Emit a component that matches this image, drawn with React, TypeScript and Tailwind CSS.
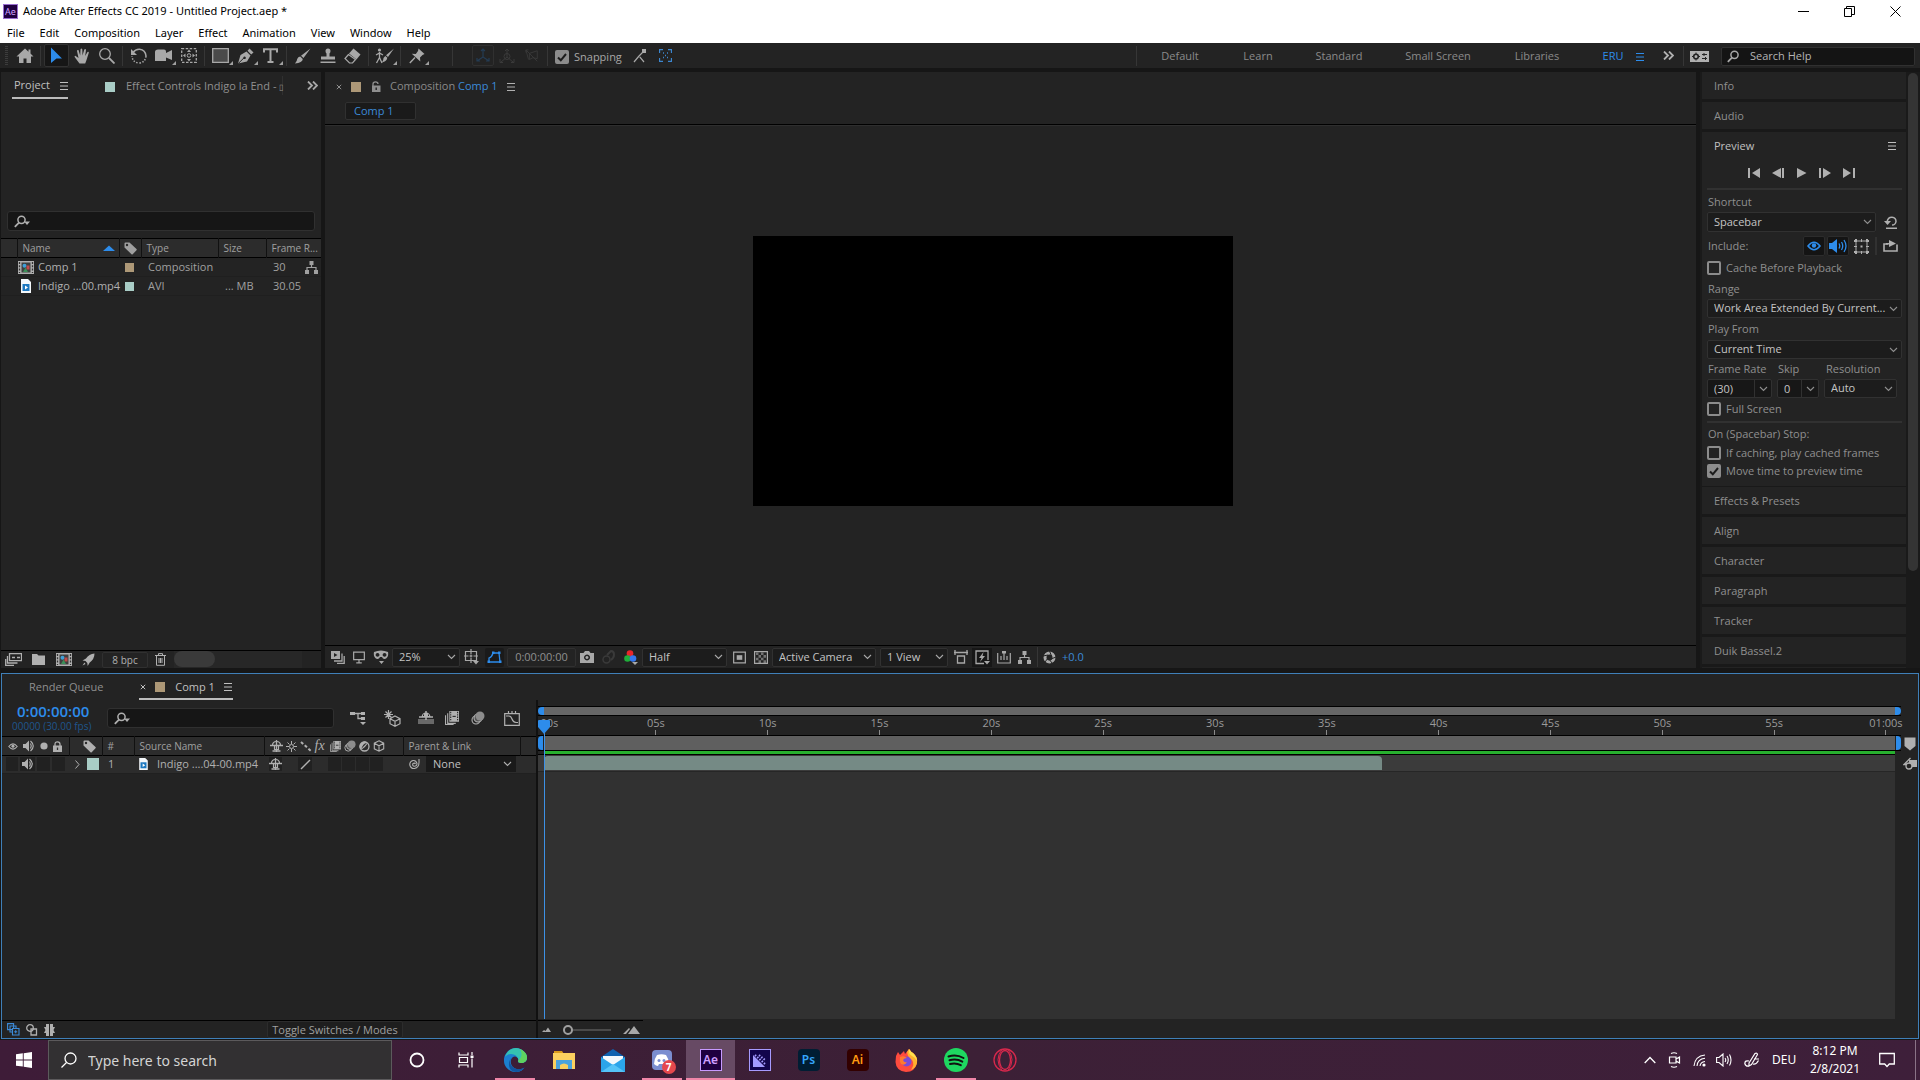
import React from "react";

type IcProps = { w?: number; h?: number; vb?: string; className?: string; children: React.ReactNode };

/* Icons share one stroke/fill convention: currentColor on a pixel grid. */
function Ic({ w = 16, h = 16, vb, className = "", children }: IcProps) {
  return (
    <svg
      width={w}
      height={h}
      viewBox={vb ?? `0 0 ${w} ${h}`}
      fill="none"
      stroke="currentColor"
      aria-hidden="true"
      className={"shrink-0 " + className}
    >
      {children}
    </svg>
  );
}
const F = { fill: "currentColor", stroke: "none" };

const Burger = () => (
  <Ic w={8} h={8}>
    <path d="M0 .5h8M0 4h8M0 7.5h8" />
  </Ic>
);
const DoubleChevron = () => (
  <Ic w={11} h={9}>
    <path d="M1 .5l4 4-4 4M6 .5l4 4-4 4" strokeWidth="1.8" />
  </Ic>
);
const Chevron = () => (
  <Ic w={9} h={6}>
    <path d="M1 1l3.5 3.5L8 1" strokeWidth="1.1" />
  </Ic>
);
const Lens = ({ caret = false }: { caret?: boolean }) => (
  <Ic w={17} h={13}>
    <circle cx="7.5" cy="4.8" r="3.6" strokeWidth="1.5" />
    <path d="M5 7.6L.8 11.8" strokeWidth="1.8" />
    {caret && <path {...F} d="M10 6.5h6l-3 3.5z" />}
  </Ic>
);
const CloseX = () => (
  <Ic w={6} h={6}>
    <path d="M.8.8l4.4 4.4M5.2.8L.8 5.2" />
  </Ic>
);
const Tag = () => (
  <Ic w={13} h={13}>
    <path {...F} fillRule="evenodd" d="M.5 1.5Q.5.5 1.5.5h4L12.5 7q.6.6 0 1.200L8.700 12.300q-.6.5-1.200 0L.5 5.500zM3 1.800a1.200 1.200 0 1 0 0 2.400 1.200 1.200 0 0 0 0-2.400z" />
  </Ic>
);
const Eye = ({ w = 10 }: { w?: number }) => (
  <Ic w={w} h={Math.round(w * 0.7)} vb="0 0 14 10">
    <path d="M1 5q6-7.500 12 0q-6 7.500-12 0z" strokeWidth="1.600" />
    <circle {...F} cx="7" cy="4.500" r="2.200" />
  </Ic>
);
const Speaker = () => (
  <Ic w={12} h={12}>
    <path {...F} d="M0 4h2.500L6 .5v11L2.500 8H0z" />
    <path d="M7.500 3.500q1.500 2.500 0 5M7.500 1q5.500 5 0 10" strokeWidth="1.200" />
  </Ic>
);
const Hier = () => (
  <Ic w={13} h={13}>
    <path {...F} d="M4.500 0h4v4h-4zM0 9h4v4H0zM9 9h4v4H9z" />
    <path d="M6.500 4v2.500M2 9V6.500h9V9" strokeWidth="1.200" />
  </Ic>
);
const CompIcon = () => (
  <Ic w={16} h={13}>
    <path {...F} d="M0 0h16v13H0z" />
    <path d="M1.500 1v11M14.500 1v11" stroke="#333" strokeWidth="1.300" strokeDasharray="2 1.300" />
    <path d="M3.500 1.500h9v10h-9z" stroke="none" fill="#3f3f3f" />
    <circle cx="6.500" cy="4.800" r="2" stroke="none" fill="#3fa0d8" />
    <path d="M8.500 4.500h3v4h-3z" stroke="none" fill="#c24a4a" />
    <path d="M7.500 6.500l2.500 4.500H5z" stroke="none" fill="#3c8f58" />
  </Ic>
);
const FileIcon = ({ small = false }: { small?: boolean }) => (
  <Ic w={small ? 9 : 10} h={small ? 12 : 14} vb="0 0 10 14">
    <path d="M0 0h7l3 3v11H0z" stroke="none" fill="#f4f8fb" />
    <path d="M1.500 5h7v7h-7z" stroke="none" fill="#1c78c0" />
    <path d="M4 6.500l3 2-3 2z" stroke="none" fill="#fff" />
  </Ic>
);
const Film = ({ w = 13 }: { w?: number }) => (
  <Ic w={w} h={w} vb="0 0 13 13">
    <path {...F} d="M4 0h9v10H4z" />
    <path d="M5.300 .8v8.600M11.700 .8v8.600" stroke="#262626" strokeDasharray="1.200 1" />
    <path d="M7 5h3" stroke="#262626" />
    <path d="M2.500 2v9.500H10M.5 4v8.500H8" />
  </Ic>
);
const BlurBalls = ({ w = 14 }: { w?: number }) => (
  <Ic w={w} h={w} vb="0 0 14 14">
    <circle cx="5" cy="9" r="4" strokeWidth="1.100" />
    <circle cx="7" cy="7" r="4" strokeWidth="1.100" fill="#555" />
    <circle {...F} cx="9" cy="5" r="4.500" fill="#8d8d8d" />
  </Ic>
);
const Cube = () => (
  <Ic w={12} h={12}>
    <path d="M6 .8l4.700 2.400v5.600L6 11.200 1.300 8.800V3.200zM1.300 3.200L6 5.800l4.700-2.600M6 5.800v5.400" strokeWidth="1.100" />
  </Ic>
);
const Shy = () => (
  <Ic w={13} h={12}>
    <path d="M0 5.500h13M6.500 0v12M2.500 11h8" strokeWidth="1.300" />
    <path d="M2.500 5.500q0-4 4-4t4 4M4.500 5.500v4h4v-4" strokeWidth="1.200" />
  </Ic>
);

function TabSwatch({ color }: { color: string }) {
  return <span className={"size-2.5 shrink-0 " + color} />;
}

function Pick({ options, label, className = "" }: { options: string[]; label: string; className?: string }) {
  return (
    <div className={"relative flex shrink-0 items-center " + className}>
      <select
        aria-label={label}
        className="h-full w-full appearance-none truncate rounded-[2px] border border-[#313131] bg-[#1c1c1c] pr-3.5 pl-1.5 text-[#c4c4c4] outline-none"
      >
        {options.map((o) => (
          <option key={o}>{o}</option>
        ))}
      </select>
      <span className="pointer-events-none absolute right-1">
        <Chevron />
      </span>
    </div>
  );
}

function Check({ label, checked = false, className = "" }: { label: string; checked?: boolean; className?: string }) {
  return (
    <label className={"flex h-[14px] shrink-0 items-center gap-[5px] leading-[14px] whitespace-nowrap " + className}>
      <span className="relative flex size-[14px] shrink-0">
        <input
          type="checkbox"
          defaultChecked={checked}
          className="peer size-[14px] appearance-none rounded-[2px] border-2 border-[#8c8c8c] checked:bg-[#8c8c8c]"
        />
        <svg className="pointer-events-none absolute inset-0 hidden peer-checked:block" width="14" height="14" fill="none" stroke="#1c1c1c" strokeWidth="2">
          <path d="M3 7.500l2.800 2.800L11 4" />
        </svg>
      </span>
      {label}
    </label>
  );
}

function Tool({ label, children, active = false, corner = false }: { label: string; children: React.ReactNode; active?: boolean; corner?: boolean }) {
  return (
    <button
      aria-label={label}
      className={
        "relative flex h-[23px] w-[25px] shrink-0 items-center justify-center " +
        (active ? "rounded-[2px] border border-[#323232] bg-[#161616] text-[#2d8ceb]" : "")
      }
    >
      {children}
      {corner && (
        <svg className="absolute right-0 bottom-0.5" width="4" height="4" fill="#a0a0a0">
          <path d="M4 0v4H0z" />
        </svg>
      )}
    </button>
  );
}
const Sep = () => (
  <span className="flex w-[7px] shrink-0 justify-center">
    <span className="h-5 w-px bg-[#363636]" />
  </span>
);

function TitleBar() {
  const menus = ["File", "Edit", "Composition", "Layer", "Effect", "Animation", "View", "Window", "Help"];
  return (
    <header className="h-[43px] shrink-0 bg-white font-['Noto_Sans',sans-serif] text-[11px] text-black">
      <div className="flex h-[23px] items-center pl-[3px]">
        <span className="flex size-[15px] items-center justify-center border border-[#9a6fd0] bg-[#1f0040] text-[9px] leading-none text-[#cfa3ff]">Ae</span>
        <h1 className="ml-[5px]">Adobe After Effects CC 2019 - Untitled Project.aep *</h1>
        <div className="mr-[19px] ml-auto flex items-center gap-[35px]">
          <button aria-label="Minimize">
            <Ic w={11} h={11}>
              <path d="M0 5.500h11" />
            </Ic>
          </button>
          <button aria-label="Restore">
            <Ic w={11} h={11}>
              <path d="M.5 2.500h7v8h-7zM2.500 2.500v-2h8v8h-3" />
            </Ic>
          </button>
          <button aria-label="Close">
            <Ic w={11} h={11}>
              <path d="M.5.5l10 10M10.500.5l-10 10" />
            </Ic>
          </button>
        </div>
      </div>
      <nav className="flex h-5 items-center gap-[15px] pl-[7px]">
        {menus.map((m) => (
          <button key={m}>{m}</button>
        ))}
      </nav>
    </header>
  );
}

function Toolbar() {
  return (
    <div className="flex h-[25px] shrink-0 items-center bg-[#232323] text-[#a8a8a8]">
      <span className="mr-1 ml-[5px] h-[19px] w-[3px] shrink-0 bg-[repeating-linear-gradient(#3c3c3c_0_1px,transparent_1px_2px)]" />
      <Tool label="Home">
        <Ic w={18} h={16}>
          <path {...F} d="M9 .5L.5 8.500h2.500V15h4.500v-4.500h3V15H15V8.500h2.500L14.500 5.600V1.500h-2v2.200z" />
        </Ic>
      </Tool>
      <Sep />
      <Tool label="Selection Tool" active>
        <Ic w={13} h={17}>
          <path {...F} d="M1 .5l11 11H6.500L1 16z" />
        </Ic>
      </Tool>
      <Tool label="Hand Tool">
        <Ic>
          <path {...F} d="M5.500 15.500L1 9.500Q0 7.800 1.300 7.700L4.500 10 3 3q0-1.500 1.500-1L6.200 7.500 6.500 1.200q.8-1.500 1.800 0L8.500 7.500 10.300 1.500q1.200-1 1.700.3L11.200 8l2.300-4q1.500-.6 1.300.8L12.500 12l-1.300 3.500z" />
        </Ic>
      </Tool>
      <Tool label="Zoom Tool">
        <Ic>
          <circle cx="6" cy="6" r="5.300" strokeWidth="1.300" />
          <path d="M10 10l5.500 5.500" strokeWidth="1.800" />
        </Ic>
      </Tool>
      <Sep />
      <Tool label="Rotation Tool">
        <Ic>
          <path d="M2 4.500Q4.500 1 8.500 1.200q6 .6 6.500 6.800" strokeWidth="1.500" />
          <path d="M15 8q-.5 6.500-7 7Q1.500 14.500 1 8" strokeWidth="1.500" strokeDasharray="1.500 1.500" />
          <path {...F} d="M0 1v6h6z" />
        </Ic>
      </Tool>
      <Tool label="Camera Tool" corner>
        <Ic w={19} h={14}>
          <path {...F} d="M1 3Q1 .5 4 .5h6q2 0 2 2v1.500L18 1v10L12 8.500V12H1z" />
        </Ic>
      </Tool>
      <Tool label="Pan Behind Tool">
        <Ic w={16} h={15}>
          <path d="M.7.7h14.600v13.600H.7z" strokeWidth="1.300" strokeDasharray="2.500 1.500" />
          <circle cx="8" cy="7.500" r="1.800" />
          <path {...F} d="M8 1.500l2 2.500H6zM8 13.500l2-2.500H6zM2 7.500l2.500-2v4zM14 7.500l-2.500-2v4z" />
        </Ic>
      </Tool>
      <Sep />
      <Tool label="Rectangle Tool" corner>
        <Ic w={17} h={15}>
          <path d="M.7.7h15.600v13.600H.7z" strokeWidth="1.300" fill="#4a4a4a" />
        </Ic>
      </Tool>
      <Tool label="Pen Tool" corner>
        <Ic>
          <path {...F} fillRule="evenodd" d="M0 15.500L2.500 7 8.500 3.500l4 4L9 13.500zM9.500 2.800L11.500.5l4 4-2.300 2zM6.500 8.500a1.300 1.300 0 1 0 .1 0z" />
          <path d="M0 15.800l6-6" stroke="#232323" />
        </Ic>
      </Tool>
      <Tool label="Type Tool" corner>
        <Ic w={15} h={15}>
          <path d="M1 4.500V1.200h13v3.300M7.500 1v13M4.500 14h6" strokeWidth="2" />
        </Ic>
      </Tool>
      <Sep />
      <Tool label="Brush Tool">
        <Ic>
          <path {...F} d="M15.500.5L8.500 10 6 7.800zM5.200 8.500l2.600 2.400Q7.500 14.500 0 15.500 2 13.500 2.200 11 3 8.500 5.200 8.500z" />
        </Ic>
      </Tool>
      <Tool label="Clone Stamp Tool">
        <Ic>
          <path {...F} d="M5.500 3q0-2.500 2.500-2.500T10.500 3q0 1.500-1 2.500v3H15v3H1v-3h5.500v-3q-1-1-1-2.500zM.5 13.500h15V15H.5z" />
        </Ic>
      </Tool>
      <Tool label="Eraser Tool">
        <Ic w={17} h={16}>
          <path {...F} d="M9.500.5l7 6-4 5-7.500-6z" />
          <path d="M4.500 6.500L1 10.500l4.500 4.500h3l3-3.500z" strokeWidth="1.200" />
        </Ic>
      </Tool>
      <Sep />
      <Tool label="Roto Brush Tool" corner>
        <Ic w={19} h={16}>
          <circle {...F} cx="4.500" cy="2" r="1.600" />
          <path d="M4.500 4v6M1 7l3.500-2L8 7M4.500 9.500L1.500 15M4.500 9.500L7 15" strokeWidth="1.300" />
          <path {...F} d="M19 .5L13 9l-2-1.700zM10.300 8l2 1.800q-.5 3.700-5.300 4.500Q8.500 12.500 8.500 10z" />
        </Ic>
      </Tool>
      <Sep />
      <Tool label="Puppet Pin Tool" corner>
        <Ic>
          <path {...F} d="M9.500.5l6 5.500-2 1-2.500 2.500.3 4L2.800 5.800l4 .2L9 3z" />
          <path d="M6 9.500L.8 15" strokeWidth="1.400" />
        </Ic>
      </Tool>
      <span className="ml-5" />
      <Sep />
      <span className="ml-4" />
      <div className="flex items-center text-[#3a3a3a]">
        <button aria-label="Local Axis" className="flex h-[21px] w-[22px] items-center justify-center rounded-[2px] border border-[#303030] text-[#243c54]">
          <Ic>
            <path d="M8 1v8l6 4M8 9l-6 4M6 3l2-2 2 2M2 10v3h3M14 10v3h-3" strokeWidth="1.200" />
          </Ic>
        </button>
        <Tool label="World Axis">
          <Ic>
            <circle cx="8" cy="8.500" r="3" />
            <path d="M8 1v8l6 5M8 9l-6 5M6 3l2-2 2 2M1 11v3.500h3M15 11v3.500h-3" />
          </Ic>
        </Tool>
        <Tool label="View Axis">
          <Ic w={14} h={14} vb="0 0 16 16">
            <path d="M5 5l9-3v9l-5-1-4 2zM1 1l13 13M1 4V1h3M1 1l3 11" />
          </Ic>
        </Tool>
      </div>
      <Sep />
      <Check label="Snapping" checked className="mt-0.5 ml-1" />
      <button aria-label="Snap to edges" className="ml-[11px]">
        <Ic w={14} h={14}>
          <path d="M1 13l5-6 5 6M6 7l5-5" strokeDasharray="8 1" strokeWidth="1.200" />
          <path {...F} d="M9 0h4v4h-4z" />
        </Ic>
      </button>
      <button aria-label="Snap to features" className="ml-3 text-[#3c86cf]">
        <Ic w={13} h={13}>
          <path d="M.5 4V.5H4M9 .5h3.500V4M12.500 9v3.500H9M4 12.500H.5V9" strokeWidth="1.300" />
          <path d="M4 4h1M8 4h1M4 8.500h1M8 8.500h1M6 6.500h1" strokeWidth="1.500" />
        </Ic>
      </button>
      <nav className="ml-auto flex h-full items-center text-[#8a8a8a]">
        <Sep />
        <button className="w-[80px] pt-0.5">Default</button>
        <button className="w-[76px] pt-0.5">Learn</button>
        <button className="w-[86px] pt-0.5">Standard</button>
        <button className="w-[112px] pt-0.5">Small Screen</button>
        <button className="w-[86px] pt-0.5">Libraries</button>
        <button className="ml-[22px] w-[22px] pt-0.5 text-[#2d8ceb]">ERU</button>
        <button aria-label="Workspace menu" className="mt-0.5 ml-3 text-[#2d8ceb]">
          <Burger />
        </button>
        <button aria-label="More workspaces" className="mr-1.5 ml-[19px] text-[#b0b0b0]">
          <DoubleChevron />
        </button>
        <Sep />
        <button aria-label="Sync settings" className="mt-0.5 ml-[3px] text-[#b0b0b0]">
          <Ic w={19} h={11}>
            <path {...F} d="M0 0h19v11H0z" />
            <circle cx="6" cy="5.500" r="2.300" stroke="#232323" strokeWidth="1.600" />
            <path d="M6 1.500v8M2 5.500h8" stroke="#232323" strokeDasharray="1.500 5" />
            <path d="M12 3.500h5M12 7.500h5" stroke="#232323" />
            <path d="M14 2v3M15.500 6v3" stroke="#232323" />
          </Ic>
        </button>
      </nav>
      <label className="mt-0.5 mr-[5px] ml-3 flex h-[19px] w-[194px] items-center gap-1.5 rounded-[2px] border border-[#303030] bg-[#141414] pl-[5px]">
        <Lens />
        <input aria-label="Search Help" placeholder="Search Help" className="w-32 bg-transparent outline-none placeholder:text-[#b4b4b4]" />
      </label>
    </div>
  );
}

function ProjectPanel() {
  const th = "h-full border-l border-[#111] pl-[5px] text-left font-normal";
  return (
    <section className="flex w-80 shrink-0 flex-col overflow-hidden bg-[#232323]">
      <div className="flex h-[27px] items-center pl-[11px]">
        <button className="flex h-[27px] w-14 items-center justify-between border-b-2 border-[#bcbcbc] pt-0.5 pl-0.5 text-[#c0c0c0]">
          Project <Burger />
        </button>
        <button className="ml-[37px] flex w-[178px] items-center gap-[11px] border-r border-[#303030] pt-0.5 whitespace-nowrap">
          <TabSwatch color="bg-[#a9cdc6]" />
          <span>
            Effect Controls Indigo la End - <span className="text-[8px]">▯</span>
          </span>
        </button>
        <button aria-label="More tabs" className="mr-[3px] ml-auto text-[#a8a8a8]">
          <DoubleChevron />
        </button>
      </div>
      <label className="mx-1.5 mt-[112px] flex h-5 shrink-0 items-center rounded-[3px] border border-[#303030] bg-[#161616] pl-1.5 text-[#b0b0b0]">
        <Lens caret />
        <input aria-label="Search project" className="w-full bg-transparent outline-none" />
      </label>
      <table className="mt-[7px] w-full table-fixed border-collapse text-[11px]">
        <colgroup>
          <col className="w-4" />
          <col className="w-[102px]" />
          <col className="w-[22px]" />
          <col className="w-[77px]" />
          <col className="w-12" />
          <col className="w-[37px]" />
          <col />
        </colgroup>
        <thead>
          <tr className="h-[19px] border-y border-black bg-[#2c2c2c] text-[10px] text-[#a0a0a0]">
            <th />
            <th className={th}>
              <span className="flex items-center justify-between pr-1">
                Name
                <Ic w={12} h={6}>
                  <path d="M0 6l6-5.500L12 6z" fill="#2d8ceb" stroke="none" />
                </Ic>
              </span>
            </th>
            <th aria-label="Label" className="border-l border-[#111] pl-1">
              <Tag />
            </th>
            <th className={th}>Type</th>
            <th className={th}>Size</th>
            <th colSpan={2} className={th}>Frame R...</th>
          </tr>
        </thead>
        <tbody className="text-[#a0a0a0]">
          <tr className="h-[19px] border-b border-[#1f1f1f]">
            <td colSpan={2} className="pl-[17px]">
              <span className="flex items-center gap-1 text-[#b0b0b0]">
                <CompIcon /> Comp 1
              </span>
            </td>
            <td className="pl-1.5"><span className="block size-[9px] bg-[#ad9877]" /></td>
            <td className="pl-[7px]">Composition</td>
            <td />
            <td className="pl-[7px]">30</td>
            <td className="pl-0.5"><Hier /></td>
          </tr>
          <tr className="h-[19px] border-b border-[#1f1f1f]">
            <td colSpan={2} className="pl-5">
              <span className="flex items-center gap-[7px] whitespace-nowrap text-[#b0b0b0]">
                <FileIcon /> Indigo ...00.mp4
              </span>
            </td>
            <td className="pl-1.5"><span className="block size-[9px] bg-[#a9cdc6]" /></td>
            <td className="pl-[7px]">AVI</td>
            <td className="pl-[7px] whitespace-nowrap">... MB</td>
            <td className="pl-[7px]">30.05</td>
            <td />
          </tr>
        </tbody>
      </table>
      <div className="mt-auto flex h-[18px] items-center border-t border-black pl-1 text-[#b0b0b0]">
        <button aria-label="Interpret footage">
          <Ic w={17} h={13}>
            <path d="M4.500.7h12v7h-12zM7 4.500h3M12 4.500h3" strokeWidth="1.300" />
            <path d="M2.500 3v7h10M.7 6v6.300H9" strokeWidth="1.300" />
          </Ic>
        </button>
        <button aria-label="New folder" className="ml-2.5">
          <Ic w={13} h={11}>
            <path {...F} d="M0 0h5l1.500 1.500H13V11H0z" />
          </Ic>
        </button>
        <button aria-label="New composition" className="ml-[11px]">
          <CompIcon />
        </button>
        <button aria-label="Project settings" className="ml-2.5">
          <Ic w={13} h={13}>
            <path {...F} d="M12.500.5Q7 .8 4 5.500L.5 7.500l3 .5 1.800 2 .4 3 2-3.500Q12.500 6 12.500.5zM2.500 9.500L.5 12.500l3-1.500z" />
          </Ic>
        </button>
        <button className="ml-[7px] h-4 w-[46px] rounded-[2px] border border-[#303030] text-[10px] leading-[14px]">8 bpc</button>
        <button aria-label="Delete" className="ml-[7px]">
          <Ic w={11} h={13}>
            <path d="M0 2.500h11M3.500 2V.6h4V2M1.500 2.500v9.800h8V2.500M4 5v5M5.500 5v5M7 5v5" />
          </Ic>
        </button>
        <span className="ml-2 h-[17px] w-[128px] bg-[#272727]">
          <span className="block h-4 w-[41px] rounded-full bg-[#3a3a3a]" />
        </span>
      </div>
    </section>
  );
}

function CompPanel() {
  const box = "h-[19px]";
  return (
    <section className="flex min-w-0 flex-1 flex-col overflow-hidden bg-[#232323]">
      <div className="flex h-[27px] items-center pt-0.5 pl-[11px]">
        <button aria-label="Close tab">
          <CloseX />
        </button>
        <span className="ml-[9px]" />
        <TabSwatch color="bg-[#ad9877]" />
        <Ic w={9} h={11} className="ml-[11px]">
          <path d="M1 5V3Q1 .8 3.500.8T6 3" strokeWidth="1.300" />
          <path {...F} d="M0 4.500h8.500V11H0z" />
          <path d="M4.200 6.500v2.500" stroke="#232323" strokeWidth="1.400" />
        </Ic>
        <button className="ml-[9px] text-[#8a8a8a]">
          Composition <span className="text-[#3c8ad8]">Comp 1</span>
        </button>
        <button aria-label="Panel menu" className="ml-[9px] text-[#b0b0b0]">
          <Burger />
        </button>
      </div>
      <div className="flex h-[26px] items-start border-b border-black pt-[3px] pl-5">
        <button className="h-[18px] w-[71px] rounded-[2px] border border-[#303030] bg-[#1a1a1a] pl-2 text-left leading-[14px] text-[#3c8ad8]">Comp 1</button>
      </div>
      <div className="flex min-h-0 flex-1 items-center justify-center border-t border-[#2e2e2e] pr-9 pb-[30px]">
        <div className="h-[270px] w-[480px] bg-black" />
      </div>
      <div className="flex h-[23px] shrink-0 items-center border-t border-black pl-1.5 whitespace-nowrap text-[#a8a8a8]">
        <button aria-label="Always preview">
          <Ic w={14} h={13}>
            <path {...F} fillRule="evenodd" d="M0 0h9v8H0zM3 2v4l3.500-2z" />
            <path d="M11 2.500v7.500H3M13.200 5v7.300H6" strokeWidth="1.300" />
          </Ic>
        </button>
        <button aria-label="Primary viewer" className="ml-2">
          <Ic w={12} h={13} vb="0 0 13 13">
            <path d="M.7.7h11.600v8H.7zM3.500 12.300h6M6.500 9v3" strokeWidth="1.300" />
          </Ic>
        </button>
        <button aria-label="VR viewer" className="ml-2">
          <Ic w={16} h={15}>
            <path {...F} fillRule="evenodd" d="M1 2q7-3 14 0 1 5-3 7-2 .5-3-2H7Q6 9.500 4 9 0 7 1 2zM4.500 3a1.900 1.900 0 1 0 .1 0zM11.500 3a1.900 1.900 0 1 0 .1 0zM6 11h5l-2.500 3z" />
          </Ic>
        </button>
        <Pick label="Magnification" options={["25%"]} className={box + " ml-[3px] w-[68px]"} />
        <button aria-label="Grid and guides" className="ml-1">
          <Ic w={16} h={16}>
            <path d="M1.500 2.500h11v9h-11zM7 0v5M7 9v5M0 7h4.500M9.500 7H14M5.500 7h3M7 5.500v3" strokeWidth="1.200" />
            <path {...F} d="M9 12h6l-3 3.500z" />
          </Ic>
        </button>
        <button aria-label="Toggle mask visibility" className="ml-[5px] flex h-[19px] w-[19px] items-center justify-center rounded-[2px] bg-[#1a1a1a] text-[#2d8ceb]">
          <Ic w={15} h={13}>
            <path d="M2 11V7q3-1 4-5h6l1 9z" strokeWidth="1.300" />
            <path {...F} d="M.5 9.500H3V12H.5zM12 9.500h2.500V12H12zM11 .5h2.500V3H11zM5 .5h2.500V3H5z" />
          </Ic>
        </button>
        <button className="ml-[3px] h-[19px] w-[69px] rounded-[2px] border border-[#303030] text-[#8f8f8f]">0:00:00:00</button>
        <button aria-label="Take snapshot" className="ml-1">
          <Ic w={14} h={12}>
            <path {...F} fillRule="evenodd" d="M0 2h3.500L5 0h4l1.500 2H14v10H0zM7 3.500a3 3 0 1 0 .1 0zM7 5a1.500 1.500 0 1 1-.1 0z" />
          </Ic>
        </button>
        <button aria-label="Show snapshot" className="ml-2 text-[#3a3a3a]">
          <Ic w={14} h={14}>
            <circle cx="4.500" cy="9.500" r="3.500" strokeWidth="1.500" />
            <path d="M5 5l4-4q3 0 3 3.500T9 10" strokeWidth="2" />
          </Ic>
        </button>
        <button aria-label="Show channel" className="ml-2">
          <Ic w={15} h={15}>
            <circle cx="6" cy="3.500" r="3.300" stroke="none" fill="#e8262b" />
            <circle cx="3.500" cy="8.500" r="3.300" stroke="none" fill="#1fae3a" />
            <circle cx="9" cy="8.500" r="3.300" stroke="none" fill="#3478f0" />
            <path {...F} d="M8 12h6l-3 3z" />
          </Ic>
        </button>
        <Pick label="Resolution" options={["Half"]} className={box + " ml-[3px] w-[85px]"} />
        <button aria-label="Region of interest" className="ml-1.5">
          <Ic w={13} h={13} vb="0 0 14 13">
            <path d="M.7.7h12.600v11.600H.7z" strokeWidth="1.300" />
            <path {...F} d="M4 4h6v5H4z" />
          </Ic>
        </button>
        <button aria-label="Transparency grid" className="ml-2">
          <Ic w={14} h={13}>
            <path d="M.6.6h12.800v11.800H.6z" strokeWidth="1.200" />
            <path d="M2 2.800h10M2 8h10" strokeWidth="2.600" strokeDasharray="2.500 2.500" opacity=".6" />
            <path d="M4.500 5.400h9M4.500 10.600h9" strokeWidth="2.600" strokeDasharray="2.500 2.500" opacity=".6" />
          </Ic>
        </button>
        <Pick label="3D view" options={["Active Camera"]} className={box + " ml-1 w-[104px]"} />
        <Pick label="View layout" options={["1 View"]} className={box + " ml-1 w-[68px]"} />
        <button aria-label="Pixel aspect ratio" className="ml-1.5">
          <Ic w={14} h={14}>
            <path d="M0 2.500h14M1 0v5M13 0v5M3.500 6h7v7h-7z" strokeWidth="1.300" />
          </Ic>
        </button>
        <button aria-label="Fast previews" className="ml-1 flex h-[19px] w-5 items-center justify-center bg-[#171717]">
          <Ic w={15} h={15}>
            <path d="M9 13.500H1V1h12v9" strokeWidth="1.300" />
            <path {...F} d="M8.500 2L4 8h2.500L5 12l5-6H7.500zM9 11h6l-3 3.500z" />
          </Ic>
        </button>
        <button aria-label="Timeline" className="ml-[5px]">
          <Ic w={14} h={13}>
            <path d="M.7 2v10h12.600V2M4 5v4M7 2v7M10 5v4" strokeWidth="1.200" />
            <path {...F} d="M5 0h4v2.500H5z" />
          </Ic>
        </button>
        <button aria-label="Flowchart" className="mr-[3px] ml-[7px]">
          <Hier />
        </button>
        <Sep />
        <button aria-label="Reset exposure" className="ml-0.5">
          <Ic w={13} h={13}>
            <circle cx="6.500" cy="6.500" r="4.500" strokeWidth="3" />
            <path d="M6.500 0l2 5M13 6l-5 2M9 12L6 8M2 11l3-4M0 5l5-1" stroke="#232323" />
          </Ic>
        </button>
        <button className="ml-1.5 text-[#3c8ad8]">+0.0</button>
      </div>
    </section>
  );
}

function PanelTitle({ children }: { children: React.ReactNode }) {
  return <button className="flex h-[30px] w-full shrink-0 items-center border-b-3 border-[#191919] pt-0.5 pl-3">{children}</button>;
}

function NumPick({ label, value, w, split }: { label: string; value: string; w: string; split: string }) {
  return (
    <div className={"flex h-[19px] items-center rounded-[2px] border border-[#313131] bg-[#171717] " + w}>
      <input aria-label={label} defaultValue={value} className={"h-full border-r border-[#313131] bg-transparent pl-1.5 text-[#c4c4c4] outline-none " + split} />
      <button aria-label={label + " options"} className="flex flex-1 justify-center">
        <Chevron />
      </button>
    </div>
  );
}

function SidePanels() {
  const iconBtn = "flex h-5 w-[22px] items-center justify-center rounded-[2px] border border-[#2c2c2c] bg-[#141414] text-[#2d8ceb]";
  return (
    <aside className="flex w-[220px] shrink-0 overflow-hidden bg-[#1a1a1a]">
      <div className="ml-0.5 flex w-[204px] shrink-0 flex-col bg-[#232323]">
        <PanelTitle>Info</PanelTitle>
        <PanelTitle>Audio</PanelTitle>
        <div className="flex h-[355px] shrink-0 flex-col border-b border-[#191919] pr-1 pl-[5px]">
          <div className="flex h-7 shrink-0 items-center justify-between pr-1.5 pl-[7px] text-[#c0c0c0]">
            <h2>Preview</h2>
            <button aria-label="Preview menu">
              <Burger />
            </button>
          </div>
          <div className="mt-2 flex h-2.5 shrink-0 items-center justify-center gap-3 pr-1.5 text-[#b0b0b0]">
            <button aria-label="First frame">
              <Ic w={12} h={10}>
                <path {...F} d="M0 0h2v10H0zM12 0v10L4 5z" />
              </Ic>
            </button>
            <button aria-label="Previous frame">
              <Ic w={12} h={10}>
                <path {...F} d="M10 0h2v10h-2zM9 0v10L0 5z" />
              </Ic>
            </button>
            <button aria-label="Play">
              <Ic w={11} h={10}>
                <path {...F} d="M1 0v10l9.500-5z" />
              </Ic>
            </button>
            <button aria-label="Next frame">
              <Ic w={12} h={10}>
                <path {...F} d="M0 0h2v10H0zM4 0v10l8-5z" />
              </Ic>
            </button>
            <button aria-label="Last frame">
              <Ic w={12} h={10}>
                <path {...F} d="M10 0h2v10h-2zM0 0v10l8-5z" />
              </Ic>
            </button>
          </div>
          <hr className="mt-2.5 border-t-2 border-[#313131]" />
          <p className="mt-[3px] pl-px leading-[18px]">Shortcut</p>
          <div className="mt-px flex items-center justify-between pr-1">
            <Pick label="Shortcut" options={["Spacebar"]} className="h-5 w-[169px]" />
            <button aria-label="Reset" className="text-[#b0b0b0]">
              <Ic w={14} h={13}>
                <path d="M3 6Q4 1 8 1.200 12 1.500 12 5.500 11.500 9 8 9M2 12.300h11" strokeWidth="1.500" />
                <path {...F} d="M0 5h7L3.500 9z" />
              </Ic>
            </button>
          </div>
          <div className="mt-1 flex h-5 shrink-0 items-center pl-px">
            Include:
            <button aria-label="Include video" className={"ml-auto " + iconBtn}>
              <Eye w={14} />
            </button>
            <button aria-label="Include audio" className={"ml-0.5 " + iconBtn}>
              <Ic w={18} h={14}>
                <path {...F} d="M0 4h3l5-4v14l-5-4H0z" />
                <path d="M10 4.500q1.500 2.500 0 5M12.500 3q2.500 4 0 8M15 1q4 6 0 12" strokeWidth="1.300" />
              </Ic>
            </button>
            <button aria-label="Include overlays" className="ml-[5px] text-[#b0b0b0]">
              <Ic w={15} h={15}>
                <path d="M2 2h11v11H2z" />
                <path {...F} d="M0 1h3v2H0zM1 0h2v3H1zM12 1h3v2h-3zM12 0h2v3h-2zM0 12h3v2H0zM1 12h2v3H1zM12 12h3v2h-3zM12 12h2v3h-2zM6.500 6.500h2v2h-2zM7 0h1v3H7zM7 12h1v3H7zM0 7h3v1H0zM12 7h3v1h-3z" />
              </Ic>
            </button>
            <span className="mx-1.5 h-[18px] w-0.5 bg-[#313131]" />
            <button aria-label="Loop" className="mr-1 text-[#b0b0b0]">
              <Ic w={15} h={12}>
                <path d="M5 4H1v7h13V4.500" strokeWidth="1.600" />
                <path {...F} d="M6 0l7 3.500-7 3.500zM3 3h4v1.500H3z" />
              </Ic>
            </button>
          </div>
          <Check label="Cache Before Playback" className="mt-[5px]" />
          <p className="mt-[5px] pl-px leading-[18px]">Range</p>
          <Pick label="Range" options={["Work Area Extended By Current..."]} className="mt-px h-[19px] w-[195px]" />
          <p className="mt-0.5 pl-px leading-[18px]">Play From</p>
          <Pick label="Play From" options={["Current Time"]} className="mt-0.5 h-[19px] w-[195px]" />
          <div className="mt-px flex pl-px leading-[18px]">
            <span className="w-[70px]">Frame Rate</span>
            <span className="w-12">Skip</span>
            <span>Resolution</span>
          </div>
          <div className="mt-px flex shrink-0 gap-[5px]">
            <NumPick label="Frame Rate" value="(30)" w="w-[65px]" split="w-[47px]" />
            <NumPick label="Skip" value="0" w="w-[42px]" split="w-6" />
            <Pick label="Preview resolution" options={["Auto"]} className="h-[19px] w-[73px]" />
          </div>
          <Check label="Full Screen" className="mt-1" />
          <hr className="mt-[5px] border-t-2 border-[#313131]" />
          <p className="mt-0.5 pl-px leading-[18px]">On (Spacebar) Stop:</p>
          <Check label="If caching, play cached frames" className="mt-[3px]" />
          <Check label="Move time to preview time" checked className="mt-1" />
        </div>
        {["Effects & Presets", "Align", "Character", "Paragraph", "Tracker", "Duik Bassel.2"].map((t) => (
          <PanelTitle key={t}>{t}</PanelTitle>
        ))}
      </div>
      <span className="mt-px ml-0.5 h-[498px] w-2.5 rounded-full bg-[#343434]" />
    </aside>
  );
}

const cell = "h-3.5 bg-[#212121]";

function LayerTable() {
  const th = "border-l border-[#111] p-0 text-left font-normal";
  return (
    <table className="w-full table-fixed border-collapse text-[11px]">
      <colgroup>
        <col className="w-[67px]" />
        <col className="w-[33px]" />
        <col className="w-8" />
        <col className="w-[130px]" />
        <col className="w-[139px]" />
        <col className="w-[117px]" />
        <col />
      </colgroup>
      <thead>
        <tr className="h-[19px] border-y border-black bg-[#2c2c2c] text-[10px] text-[#a0a0a0]">
          <th aria-label="A/V features" className="p-0">
            <span className="flex items-center gap-[5px] pl-1.5 text-[#b0b0b0]">
              <Eye />
              <Speaker />
              <Ic w={8} h={8}>
                <circle {...F} cx="4" cy="4" r="3.600" />
              </Ic>
              <Ic w={9} h={11}>
                <path d="M2 5V3.200Q2 .8 4.500.8T7 3.200V5" strokeWidth="1.300" />
                <path {...F} d="M0 4.500h9V11H0z" />
                <path d="M4.500 6.500v2.500" stroke="#2e2e2e" strokeWidth="1.300" />
              </Ic>
            </span>
          </th>
          <th aria-label="Label" className={th}>
            <span className="flex pl-[13px] text-[#b0b0b0]">
              <Tag />
            </span>
          </th>
          <th className={th}>
            <span className="pl-[5px]">#</span>
          </th>
          <th className={th}>
            <span className="pl-[5px]">Source Name</span>
          </th>
          <th aria-label="Switches" className={th}>
            <span className="flex items-center gap-[3px] pl-[5px] text-[#b0b0b0]">
              <Shy />
              <Ic w={11} h={11}>
                <circle cx="5.500" cy="5.500" r="2" />
                <path d="M5.500 0v3M5.500 8v3M0 5.500h3M8 5.500h3M1.500 1.500l2 2M7.500 7.500l2 2M9.500 1.500l-2 2M3.500 7.500l-2 2" />
              </Ic>
              <Ic w={12} h={11}>
                <path d="M1 1l10 9" strokeWidth="2" strokeDasharray="3 2" />
              </Ic>
              <i className="w-3 font-['Liberation_Serif',serif] text-[14px] leading-none">fx</i>
              <Film w={11} />
              <BlurBalls w={12} />
              <Ic w={11} h={11}>
                <circle cx="5.500" cy="5.500" r="4.500" strokeWidth="1.300" />
                <path {...F} d="M9 2Q4 1 2 9q4-2 7-7zM1.500 8.500A5 5 0 0 1 8.500 1.500z" />
              </Ic>
              <Cube />
            </span>
          </th>
          <th className={th}>
            <span className="pl-[5px]">Parent &amp; Link</span>
          </th>
          <th className={th} />
        </tr>
      </thead>
      <tbody>
        <tr className="h-[17px] border-b border-[#202020] bg-[#2c2c2c] text-[#b0b0b0]">
          <td className="p-0">
            <span className="flex items-center gap-0.5 pl-1">
              <span className={cell + " w-3"} />
              <span className={cell + " flex w-[15px] items-center justify-center"}>
                <Speaker />
              </span>
              <span className={cell + " w-[13px]"} />
              <span className={cell + " w-[13px]"} />
            </span>
          </td>
          <td className="p-0">
            <span className="flex items-center gap-[7px] pl-1.5">
              <Ic w={5} h={9}>
                <path d="M.5.5l3.500 4-3.500 4" />
              </Ic>
              <span className="size-3 bg-[#a9cdc6]" />
            </span>
          </td>
          <td className="p-0 pl-1.5">1</td>
          <td className="p-0 pl-[5px]">
            <span className="flex items-center gap-[9px] whitespace-nowrap">
              <FileIcon small /> Indigo ....04-00.mp4
            </span>
          </td>
          <td className="p-0">
            <span className="flex items-center gap-px pl-[5px]">
              <span className={cell + " flex w-[13px] items-center justify-center"}>
                <Shy />
              </span>
              <span className="w-3.5" />
              <span className={cell + " flex w-[14px] items-center justify-center"}>
                <Ic w={11} h={11}>
                  <path d="M1 10l9-9" strokeWidth="1.400" />
                </Ic>
              </span>
              <span className="w-3.5" />
              <span className={cell + " w-[13px]"} />
              <span className={cell + " w-[13px]"} />
              <span className={cell + " w-[13px]"} />
              <span className={cell + " w-[13px]"} />
            </span>
          </td>
          <td className="p-0">
            <span className="flex items-center gap-1.5 pl-[5px]">
              <Ic w={12} h={12}>
                <path d="M7.500 6Q6.500 4.500 5 5.500 4 7.500 6 8.300 9 8.500 9 5.500 8 2 5 2.500 1.500 3.500 1.800 7 3 11 6.500 10.500 11 9.500 11 4.500V1" strokeWidth="1.100" />
              </Ic>
              <span className="relative flex items-center">
                <select aria-label="Parent layer" className="h-4 w-[90px] appearance-none bg-[#1a1a1a] pl-[7px] leading-4 text-[#c0c0c0] outline-none">
                  <option>None</option>
                </select>
                <span className="pointer-events-none absolute right-1">
                  <Chevron />
                </span>
              </span>
            </span>
          </td>
          <td />
        </tr>
      </tbody>
    </table>
  );
}

function TimeGraph() {
  const labels = [":00s", "05s", "10s", "15s", "20s", "25s", "30s", "35s", "40s", "45s", "50s", "55s"];
  return (
    <div className="relative flex min-w-0 flex-1 flex-col">
      <div className="mt-1.5 flex h-2.5 shrink-0 border-y border-black">
        <span className="w-1.5 rounded-l-full bg-[#2d8ceb]" />
        <span className="flex-1 bg-[#666]" />
        <span className="w-1.5 rounded-r-full bg-[#2d8ceb]" />
      </div>
      <div className="mr-[15px] ml-1.5 flex h-[19px] shrink-0 text-[#9a9a9a]">
        {labels.map((l, i) => (
          <div key={l} className="flex-1">
            <div className="flex w-0 flex-col items-center">
              <span className={"h-3.5 leading-[14px] " + (i === 0 ? "pl-2" : "")}>{l}</span>
              <span className="h-[5px] w-px shrink-0 bg-[#8a8a8a]" />
            </div>
          </div>
        ))}
        <div className="flex w-0 flex-col items-center">
          <span className="h-3.5 leading-[14px]">01:00s</span>
          <span className="h-[5px] w-px shrink-0 bg-[#8a8a8a]" />
        </div>
      </div>
      <div className="flex h-4 shrink-0 border-y border-black">
        <span className="w-[5px] rounded-l-[4px] bg-[#2d8ceb]" />
        <span className="ml-px flex-1 bg-[#5f5f5f]" />
        <span className="ml-px w-[5px] rounded-r-[4px] bg-[#2d8ceb]" />
      </div>
      <div className="mr-1.5 ml-1.5 h-[3px] shrink-0 bg-[#28b02f]" />
      <div className="mr-1.5 flex min-h-0 flex-1 flex-col border-t border-black bg-[#313131]">
        <div className="h-[17px] shrink-0 border-b border-[#262626] bg-[#3b3b3b] pt-px pl-1.5">
          <div className="h-[14px] rounded-t-[4px] bg-[#758a85]" style={{ width: `${(37.4 / 60.3) * 100}%` }} />
        </div>
      </div>
      <div className="h-[19px] shrink-0" />
      <div className="pointer-events-none absolute top-5 bottom-[19px] left-0 flex w-3 flex-col items-center">
        <svg width="12" height="14" fill="#2d8ceb" className="shrink-0">
          <path d="M0 1q0-1 1-1h10q1 0 1 1v6l-6 7-6-7z" />
        </svg>
        <span className="w-px flex-1 bg-[#3d91e6]" />
      </div>
    </div>
  );
}

function Timeline() {
  return (
    <section className="m-px flex min-h-0 flex-col border border-[#3f7fb8] bg-[#232323]">
      <div className="flex h-[26px] shrink-0 items-center">
        <button className="ml-[27px] w-[71px] text-left whitespace-nowrap">Render Queue</button>
        <div className="ml-[39px] flex h-[26px] w-[94px] items-center justify-between border-b-2 border-[#bcbcbc] px-px pt-0.5 text-[#c0c0c0]">
          <button aria-label="Close timeline tab">
            <CloseX />
          </button>
          <TabSwatch color="bg-[#ad9877]" />
          <button className="pl-px">Comp 1</button>
          <button aria-label="Timeline menu">
            <Burger />
          </button>
        </div>
      </div>
      <div className="flex min-h-0 flex-1">
        <div className="flex w-[536px] shrink-0 flex-col border-r-2 border-[#111]">
          <div className="flex h-[36px] shrink-0 items-center text-[#b0b0b0]">
            <div className="w-[102px] pl-2.5 leading-[15px] whitespace-nowrap">
              <p className="pl-[5px] text-[15px] leading-4 font-semibold text-[#2d8ceb]">0:00:00:00</p>
              <p className="text-[10px] leading-[14px] text-[#1f568d]">00000 (30.00 fps)</p>
            </div>
            <label className="ml-[3px] flex h-5 w-[227px] items-center rounded-[3px] border border-[#303030] bg-[#161616] pl-1.5">
              <Lens caret />
              <input aria-label="Search layers" className="w-full bg-transparent outline-none" />
            </label>
            <button aria-label="Composition mini-flowchart" className="ml-4">
              <Ic w={17} h={14}>
                <path {...F} d="M0 1h5v3H0zM11 1h4v3h-4zM11 6h4v3h-4zM10 11h6l-3 3z" />
                <path d="M5 2.500h6M8 2.500v5h3" strokeWidth="1.300" />
              </Ic>
            </button>
            <button aria-label="Draft 3D" className="ml-[17px]">
              <Ic w={17} h={17}>
                <path d="M4.500 0v9M0 4.500h9M1.500 1.500l6 6M7.500 1.500l-6 6" strokeWidth="1.200" />
                <path d="M11 6l5 2.700v5L11 16.300l-5-2.600v-5zM6 8.700l5 2.600 5-2.600M11 11.300v5" fill="#232323" strokeWidth="1.200" />
              </Ic>
            </button>
            <button aria-label="Hide shy layers" className="ml-[17px]">
              <Ic w={16} h={14}>
                <path {...F} d="M0 8h16v5H0z" opacity=".5" />
                <path d="M1 6h14M8 0v9" strokeWidth="1.500" />
                <path {...F} d="M3.500 6Q4 1.500 8 1.500T12.500 6z" />
                <path d="M5.500 5V3.500M10.500 5V3.500" stroke="#232323" />
              </Ic>
            </button>
            <button aria-label="Frame blending" className="ml-[11px]">
              <Film w={14} />
            </button>
            <button aria-label="Motion blur" className="ml-3">
              <BlurBalls />
            </button>
            <button aria-label="Graph editor" className="ml-[19px]">
              <Ic w={16} h={15}>
                <path d="M.7 2.700h14.600v11.600H.7zM4.500 0v2.500M8 0v2.500M11.500 0v2.500" strokeWidth="1.200" />
                <path d="M2 5h3q2 0 3 3t4 3.500h2" strokeWidth="1.200" />
              </Ic>
            </button>
          </div>
          <LayerTable />
          <div className="mt-auto flex h-[18px] items-center gap-1.5 border-t border-black pl-[5px] text-[#b0b0b0]">
            <button aria-label="Layer switches pane" className="text-[#3c8ad8]">
              <Ic w={13} h={13}>
                <path d="M.6.6h6v6h-6zM3 3h6v6H3z" strokeWidth="1.100" />
                <path d="M5.500 5.500h6.500v6.500H5.500zM7.200 8.700h3M8.700 7.200v3" fill="#232323" strokeWidth="1.100" />
              </Ic>
            </button>
            <button aria-label="Transfer controls pane">
              <Ic w={12} h={12}>
                <circle cx="4" cy="4" r="3.300" strokeWidth="1.300" />
                <path d="M5 5h5.500v6H5z" strokeWidth="1.300" />
              </Ic>
            </button>
            <button aria-label="In/Out pane">
              <Ic w={11} h={12}>
                <path {...F} d="M0 3h2V0h3v12H2V9H0l1.500-3zM11 3H9V0H6v12h3V9h2L9.500 6z" />
              </Ic>
            </button>
            <button className="mr-[133px] ml-auto h-[17px] w-[136px] rounded-[2px] border border-[#2c2c2c] bg-[#1e1e1e] leading-[15px] text-[#a0a0a0]">
              Toggle Switches / Modes
            </button>
          </div>
        </div>
        <div className="flex min-w-0 flex-1 flex-col">
          <div className="flex min-h-0 flex-1">
            <TimeGraph />
            <div className="flex w-[17px] shrink-0 flex-col items-center gap-1.5 pt-[37px] text-[#b0b0b0]">
              <button aria-label="Composition marker">
                <Ic w={12} h={14}>
                  <path {...F} d="M.5.5h11v8.500L6 13.500.5 9z" />
                </Ic>
              </button>
              <button aria-label="Composition button">
                <Ic w={14} h={14}>
                  <path {...F} d="M6 3h8v7H6z" />
                  <path d="M7.500 1L1 7.500h5" strokeWidth="1.300" />
                  <circle cx="6" cy="9" r="3" strokeWidth="1.300" fill="#232323" />
                </Ic>
              </button>
            </div>
          </div>
          <div className="-mt-[18px] flex h-[18px] w-[105px] shrink-0 items-center border-t border-black pl-1 text-[#a8a8a8]">
            <Ic w={9} h={5}>
              <path {...F} d="M0 5l2-2 1.500 1L6 .5 9 5z" />
            </Ic>
            <input
              type="range"
              aria-label="Timeline zoom"
              defaultValue={0}
              className="mx-3 h-0.5 w-12 appearance-none bg-[#4a4a4a] [&::-webkit-slider-thumb]:size-2.5 [&::-webkit-slider-thumb]:appearance-none [&::-webkit-slider-thumb]:rounded-full [&::-webkit-slider-thumb]:border-2 [&::-webkit-slider-thumb]:border-[#a0a0a0] [&::-webkit-slider-thumb]:bg-[#232323]"
            />
            <Ic w={17} h={8}>
              <path {...F} d="M0 8l6-6 1 1-4 5zM5 8l6-8 6 8z" />
            </Ic>
          </div>
        </div>
      </div>
    </section>
  );
}

function DockApp({ label, children, line = false, active = false }: { label: string; children: React.ReactNode; line?: boolean; active?: boolean }) {
  return (
    <button
      aria-label={label}
      className={"relative flex h-10 w-[49px] shrink-0 items-center justify-center " + (active ? "bg-[#674a64]" : "")}
    >
      {children}
      {line && <span className={"absolute bottom-0 h-0.5 bg-[#ef86a8] " + (active ? "w-full" : "w-10")} />}
    </button>
  );
}

function Taskbar() {
  const tile = "flex size-[22px] items-center justify-center text-[12px] font-semibold leading-none ";
  return (
    <footer className="flex h-10 shrink-0 items-center bg-linear-to-r from-[#3e1c38] via-[#3c2036] to-[#3e1f3a] font-['Noto_Sans',sans-serif] text-white">
      <button aria-label="Start" className="flex w-12 justify-center">
        <Ic w={16} h={16}>
          <path {...F} d="M0 2.300L6.800 1.300V7.500H0zM7.700 1.200L16 0v7.500H7.700zM0 8.400h6.800v6.200L0 13.700zM7.700 8.400H16V16l-8.300-1.200z" />
        </Ic>
      </button>
      <label className="flex h-10 w-[344px] items-center gap-[11px] border border-[#5c5a5c] bg-[#323032] pl-3">
        <Ic w={16} h={16}>
          <circle cx="9.500" cy="6.500" r="5.500" strokeWidth="1.300" />
          <path d="M5.500 10.500L.5 15.500" strokeWidth="1.300" />
        </Ic>
        <input aria-label="Search" placeholder="Type here to search" className="w-64 bg-transparent text-[14px] outline-none placeholder:text-[#d4d4d4]" />
      </label>
      <DockApp label="Cortana">
        <Ic>
          <circle cx="8" cy="8" r="6.500" strokeWidth="1.800" />
        </Ic>
      </DockApp>
      <DockApp label="Task View">
        <Ic>
          <path d="M1 .5v2.500h9V.5M1.500 5.500h8v5h-8zM1 15.500V13h9v2.500M14 0v3M14 6.500v9" strokeWidth="1.200" />
          <path {...F} d="M12.500 3.500h3v2.500h-3z" />
        </Ic>
      </DockApp>
      <DockApp label="Microsoft Edge" line>
        <Ic w={24} h={24}>
          <path stroke="none" fill="#1b7fd0" d="M1 13C.5 5 7 0 13 0c6 .5 11 5 11 9.500 0 4-3 5.500-6 5.500-3-.2-3-1.500-2.500-3C15 9 12 7.500 10 9c-3 2-3 7 0 10s8 3 11.500.5C18 25 11 25 7 22.500 3.500 20.500 1 17 1 13z" />
          <path stroke="none" fill="#35c1b1" d="M2 9C4 3 8 0 13 0c6 .5 11 5 11 9.500 0 4-3 5.500-6 5.500-3-.2-3-1.500-2.500-3C15 7 7 3 2 9z" />
          <path stroke="none" fill="#5fd35f" d="M17 1c4.500 2 7 5 7 8.500 0 4-3 5.500-6 5.500-3-.2-3-1.500-2.500-3Q21 8 17 1z" />
          <path stroke="none" fill="#12559f" d="M9 9.500c-3 3-2.500 7 1 9.700 3.500 2.500 8 2.500 11.500.3C18 25 10 25 7.500 21.500 5 18 5.500 12 9 9.500z" />
        </Ic>
      </DockApp>
      <DockApp label="File Explorer">
        <Ic w={22} h={20}>
          <path stroke="none" fill="#d99a1c" d="M1 1h8l2 3v5H1z" />
          <path stroke="none" fill="#fbd05f" d="M0 3h22v16H0z" />
          <path stroke="none" fill="#4aa3dd" d="M3 10h16v9h-4v-4q-4-3-8 0v4H3z" />
        </Ic>
      </DockApp>
      <DockApp label="Mail">
        <Ic w={24} h={23}>
          <path stroke="none" fill="#0f62b0" d="M0 8l12-8 12 8v14H0z" />
          <path stroke="none" fill="#f3f8fc" d="M2 7h20v9H2z" />
          <path stroke="none" fill="#2ba4ea" d="M0 8l12 8 12-8v15H0z" />
          <path stroke="none" fill="#55c3f7" d="M0 23l12-8 12 8z" />
        </Ic>
      </DockApp>
      <DockApp label="Discord" line>
        <span className="relative flex size-5 items-center justify-center rounded-[4px] bg-[#7b8ed0]">
          <Ic w={15} h={12}>
            <path stroke="none" fill="#fff" d="M3 1q4.500-1.500 9 0 3 4 3 9-2 2-4 2l-1-2H5l-1 2Q2 12 0 10 0 5 3 1z" />
            <circle cx="5" cy="6.500" r="1.500" stroke="none" fill="#7b8ed0" />
            <circle cx="10" cy="6.500" r="1.500" stroke="none" fill="#7b8ed0" />
          </Ic>
          <span className="absolute -right-1 -bottom-1 flex size-3.5 items-center justify-center rounded-full bg-[#e5484d] text-[10px] leading-none font-bold">7</span>
        </span>
      </DockApp>
      <DockApp label="After Effects" line active>
        <span className={tile + "border border-[#c79aff] bg-[#1f0040] text-[#cf9fff]"}>Ae</span>
      </DockApp>
      <DockApp label="Media Encoder">
        <span className={tile + "border border-[#a69aff] bg-[#12054d]"}>
          <Ic w={13} h={13}>
            <path stroke="none" fill="#a39bff" d="M0 1l12 12H0z" />
            <path stroke="#a39bff" strokeWidth="2" strokeDasharray="1.500 1.500" d="M2 1l10 9M6 1l6 5" />
          </Ic>
        </span>
      </DockApp>
      <DockApp label="Photoshop">
        <span className={tile + "rounded-[4px] bg-[#001d33] text-[#35a6fb]"}>Ps</span>
      </DockApp>
      <DockApp label="Illustrator">
        <span className={tile + "rounded-[4px] bg-[#320000] text-[#ff9a10]"}>Ai</span>
      </DockApp>
      <DockApp label="Firefox">
        <Ic w={23} h={23}>
          <path stroke="none" fill="#ff4b3e" d="M1 7l2-4 2 3 4-4 1 3 4-5q2 3 4 4 5 4 4 10-2 9-11 9Q1 22 .5 13z" />
          <path stroke="none" fill="#ffb02e" d="M12 3l2-3q2 3 4 4 5 4 4 10-1 5-6 7 4-6 1-10-4-2-5-8z" />
          <path stroke="none" fill="#ffe14d" d="M14 0q2 3 4 4 4 4 4 8-2-4-5-5-4-2-3-7z" />
          <circle cx="11.500" cy="12.500" r="5" stroke="none" fill="#7a4bd6" />
          <path stroke="none" fill="#ff7a2e" d="M5 8q4-2 7 1-3 0-4 2 1 3 4 2-2 4-6 2-2-3-1-7z" />
        </Ic>
      </DockApp>
      <DockApp label="Spotify" line>
        <Ic w={24} h={24}>
          <circle cx="12" cy="12" r="12" stroke="none" fill="#1ed760" />
          <path d="M4.500 8.500q8-2.500 15 1.500M5.500 12.300q7-2 12.800 1.300M6 16q6-1.500 10.800 1.200" stroke="#111" strokeWidth="2" strokeLinecap="round" />
        </Ic>
      </DockApp>
      <DockApp label="Opera">
        <Ic w={24} h={24}>
          <circle cx="12" cy="12" r="11" stroke="#d8284c" strokeWidth="1.300" />
          <ellipse cx="12" cy="12" rx="5.500" ry="9.500" stroke="#d8284c" strokeWidth="1.300" />
          <path d="M9 1.500q-8 10 0 21M15 1.500q8 10 0 21" stroke="#d8284c" />
        </Ic>
      </DockApp>
      <div className="mr-1 ml-auto flex h-10 items-center border-r border-[#8a7387] text-[12px]">
        <button aria-label="Show hidden icons">
          <Ic w={12} h={8}>
            <path d="M.7 7L6 1.500 11.300 7" strokeWidth="1.300" />
          </Ic>
        </button>
        <button aria-label="Meet Now" className="ml-3">
          <Ic w={13} h={16}>
            <path d="M1.500 5h6.500v6H1.500zM8 7l3.500-2v6L8 9M3 1.500q3-1.500 6 0M3 14.500q3 1.500 6 0" strokeWidth="1.200" />
          </Ic>
        </button>
        <button aria-label="Network" className="ml-3">
          <Ic w={13} h={13}>
            <path d="M1 12Q2 2 12 1M4 12Q4.500 5 12 4.200M7 12Q7.500 8 12 7.500" strokeWidth="1.100" />
            <circle {...F} cx="11" cy="11" r="1.600" />
          </Ic>
        </button>
        <button aria-label="Volume" className="ml-2.5">
          <Ic w={16} h={14}>
            <path d="M.6 4.500H3L7 1v12L3 9.500H.6zM9 5q1.500 2 0 4M11 3q2.500 4 0 8M13.500 1.500q3 5.500 0 11" strokeWidth="1.100" />
          </Ic>
        </button>
        <button aria-label="Pen workspace" className="ml-3">
          <Ic w={16} h={16}>
            <path d="M5 11L11 1.500q2-1 2.500 1L7.500 12.500 5 14zM5 9Q1 8 .8 11.500 2 15 5 14M9 12q3 1 5.500-3.500M10 7h5" strokeWidth="1.200" />
          </Ic>
        </button>
        <button className="ml-3 w-6">DEU</button>
        <button className="ml-1.5 w-[66px] leading-[18px]">
          <span className="block">8:12 PM</span>
          <span className="block">2/8/2021</span>
        </button>
        <button aria-label="Notifications" className="mr-5 ml-[11px]">
          <Ic w={16} h={16}>
            <path d="M.7 1.500h14.600v10.500h-5L8 14.500 5.700 12h-5z" strokeWidth="1.300" />
          </Ic>
        </button>
      </div>
    </footer>
  );
}

export default function App() {
  return (
    <div className="flex h-screen w-full flex-col overflow-hidden bg-[#161616] font-['Open_Sans','Noto_Sans_CJK_JP',sans-serif] text-[11px] text-[#8f8f8f]">
      <TitleBar />
      <Toolbar />
      <main className="grid min-h-0 flex-1 grid-rows-[minmax(0,596fr)_minmax(0,368fr)] gap-1 pt-1">
        <div className="flex min-h-0 gap-1 pl-px">
          <ProjectPanel />
          <CompPanel />
          <SidePanels />
        </div>
        <Timeline />
      </main>
      <Taskbar />
    </div>
  );
}
